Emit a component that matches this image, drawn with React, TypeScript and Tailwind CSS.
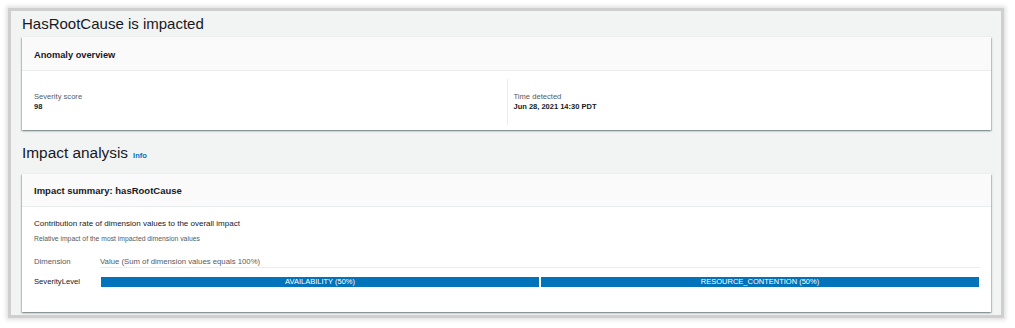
import React from 'react';

const cardShadow =
  'shadow-[0_1px_2px_0_rgba(0,28,36,0.3),1px_1px_1px_0_rgba(0,28,36,0.15),-1px_1px_1px_0_rgba(0,28,36,0.15)]';

const segments = [
  { label: 'AVAILABILITY (50%)', share: 50 },
  { label: 'RESOURCE_CONTENTION (50%)', share: 50 },
];

const KeyValue: React.FC<{ label: string; value: string; divider?: boolean }> = ({ label, value, divider }) => (
  <div className={`h-[46px] flex flex-col justify-center ${divider ? 'border-l border-[#eaeded] pl-[6px]' : ''}`}>
    <div className="text-[7.6px] leading-[10px] text-[#545b64]">{label}</div>
    <div className="text-[7.5px] leading-[10px] mt-[0.5px] font-bold text-[#16191f]">{value}</div>
  </div>
);

export default function App() {
  return (
    <div className="w-[1015px] h-[328px] bg-white pt-[8px] pl-[8px] font-['Liberation_Sans',Arial,sans-serif] text-[#16191f]">
      <div className="w-[996px] h-[310px] border-[3px] border-[#cfcfcf] bg-[#f2f3f3] shadow-[0_0_4px_2px_rgba(0,0,0,0.12)] pt-[3px] pl-[11px] pr-[10px]">
        <h1 className="text-[15px] leading-[20px] font-normal">HasRootCause is impacted</h1>

        {/* Anomaly overview */}
        <div className={`mt-[3px] bg-white ${cardShadow}`}>
          <div className="bg-[#fafafa] border-b border-[#eaeded] pt-[12px] pb-[9px] px-[12px]">
            <h2 className="text-[9.25px] leading-[12px] font-bold">Anomaly overview</h2>
          </div>
          <div className="grid grid-cols-2 pt-[8px] pb-[5px] px-[12px]">
            <KeyValue label="Severity score" value="98" />
            <KeyValue label="Time detected" value="Jun 28, 2021 14:30 PDT" divider />
          </div>
        </div>

        {/* Impact analysis */}
        <div className="mt-[13px] flex items-baseline gap-[5px]">
          <h1 className="text-[15.4px] leading-[20px] font-normal">Impact analysis</h1>
          <a className="text-[7.5px] font-bold text-[#0073bb]">Info</a>
        </div>

        <div className={`mt-[11px] bg-white ${cardShadow}`}>
          <div className="bg-[#fafafa] border-b border-[#eaeded] pt-[11px] pb-[9px] px-[12px]">
            <h2 className="text-[9.5px] leading-[12px] font-bold">Impact summary: hasRootCause</h2>
          </div>
          <div className="pt-[11px] pb-[25px] pl-[12px] pr-[11px]">
            <div className="text-[8px] leading-[11px]">Contribution rate of dimension values to the overall impact</div>
            <div className="mt-[4.5px] text-[6.8px] leading-[9px] text-[#545b64]">
              Relative impact of the most impacted dimension values
            </div>

            <div className="mt-[14px] grid grid-cols-[66px_1fr] text-[7.75px] leading-[10px]">
              <div className="text-[#545b64]">Dimension</div>
              <div className="text-[#545b64] border-b border-[#eaeded]">
                Value (Sum of dimension values equals 100%)
              </div>
              <div className="pt-[9px] text-[7.66px]">SeverityLevel</div>
              <div className="pt-[9px] px-[1px] flex gap-[2px]">
                {segments.map((s) => (
                  <div
                    key={s.label}
                    className="h-[10px] bg-[#0073bb] text-white text-[7.5px] leading-[10px] text-center"
                    style={{ width: `${s.share}%` }}
                  >
                    {s.label}
                  </div>
                ))}
              </div>
            </div>
          </div>
        </div>
      </div>
    </div>
  );
}
